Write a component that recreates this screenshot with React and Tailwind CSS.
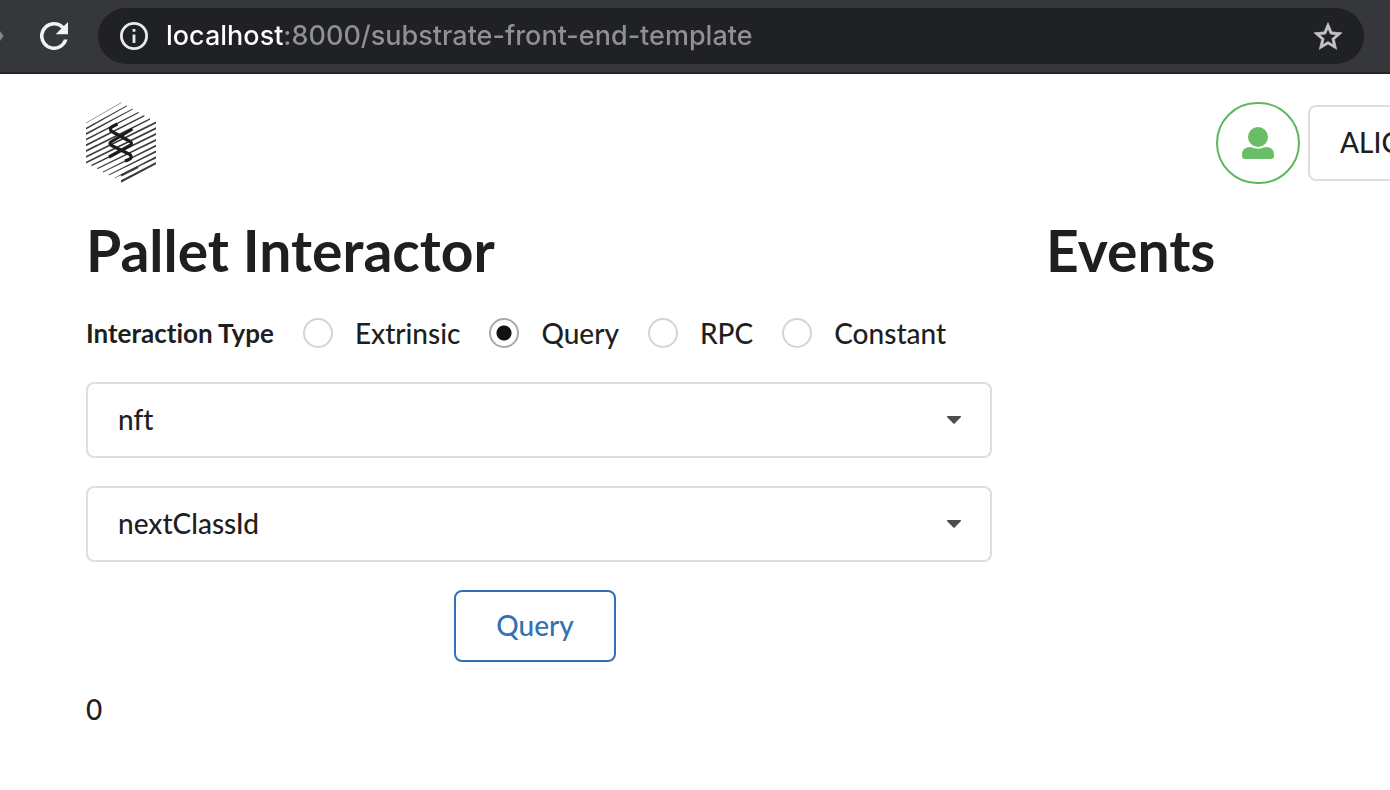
import { useState } from "react";

/* Each stripe: left x, left y, right x, right y, thickness at the left, thickness at the right */
const stripes = [
  [0, 21, 35.5, 0.5, 0.4, 0.7],
  [0, 26.6, 41, 3.8, 1.8, 0.9],
  [0, 32, 46.7, 7, 1.9, 1.1],
  [0, 37.6, 52.7, 10.3, 1.9, 1.3],
  [0, 43.3, 58.3, 13.8, 1.9, 1.5],
  [0, 49, 64, 17, 1.9, 1.6],
  [0, 54.8, 70, 20.5, 1.8, 1.8],
  [0, 60.6, 70, 26.3, 1.7, 1.9],
  [5.5, 63.4, 70, 32.1, 1.5, 2],
  [11.3, 66.7, 70, 37.9, 1.3, 2],
  [17, 70, 70, 43.7, 1.1, 2.1],
  [22.8, 73, 70, 49.5, 0.9, 2.2],
  [28.6, 76, 70, 55.3, 0.6, 2.3],
  [35, 79.5, 70, 61.1, 2.3, 2.3],
];

function SubstrateLogo() {
  return (
    <svg viewBox="0 0 70 82" className="h-[82px] w-[70px]" role="img" aria-label="Substrate">
      {stripes.map(([x1, y1, x2, y2, a, b]) => (
        <polygon
          key={y1}
          fill="#3a3a3a"
          points={`${x1},${y1 - a / 2} ${x2},${y2 - b / 2} ${x2},${y2 + b / 2} ${x1},${y1 + a / 2}`}
        />
      ))}
      <path d="M35 73.500L52 65" stroke="#3a3a3a" strokeWidth="2.2" />
      <g fill="none" stroke="#1c1c1c" strokeWidth="3.2" strokeLinejoin="round">
        <path d="M31.500 22l-5.500 2.800q-2.500 1.700-1 4.200L44 39.500q3 2 0 4L23 55" />
        <path d="M46.500 27L25.500 39.500q-3 2 0 4L44 52.500q2 2.500.5 4-1.500 1.300-5.500 2.500" />
      </g>
    </svg>
  );
}

function Dropdown({ label, options }) {
  return (
    <div className="relative">
      <select
        aria-label={label}
        className="block h-[76px] w-full appearance-none rounded-lg border-2 border-[#dededf] bg-white px-[30px] pb-0.5 text-[28px] font-medium text-[#1f1f1f]"
      >
        {options.map((option) => (
          <option key={option}>{option}</option>
        ))}
      </select>
      <svg viewBox="0 0 14 8" className="pointer-events-none absolute top-[34px] right-[31px] h-2 w-3.5">
        <path d="M.5 0h13q1 .5 0 1.500L7.700 7.500q-.7.600-1.400 0L.5 1.500Q-.5.500.5 0z" fill="#4c4c4c" />
      </svg>
    </div>
  );
}

function BrowserBar() {
  return (
    <header className="flex h-[74px] items-center border-b-2 border-[#242529] bg-[#36373b] pr-[26px]">
      <svg viewBox="0 0 4 10" className="h-2.5 w-1">
        <path d="M0 0l3.500 5L0 10z" fill="#85868a" />
      </svg>
      <button type="button" aria-label="Reload" className="ml-9">
        <svg viewBox="4 4 16 16" className="h-7 w-7" fill="#f1f3f4">
          <path d="M17.65 6.350A7.960 7.960 0 0 0 12 4a8 8 0 1 0 7.730 10h-2.080A6 6 0 1 1 12 6c1.660 0 3.140.690 4.220 1.780L13 11h7V4z" />
        </svg>
      </button>
      <div className="ml-[30px] flex h-14 flex-1 items-center rounded-full bg-[#202124] px-[22px]">
        <svg viewBox="2 2 20 20" className="h-7 w-7" fill="#e8eaed">
          <path d="M11 7h2v2h-2zm0 4h2v6h-2zm1-9a10 10 0 1 0 0 20 10 10 0 0 0 0-20zm0 18a8 8 0 1 1 0-16 8 8 0 0 1 0 16z" />
        </svg>
        <input
          type="text"
          aria-label="Address"
          defaultValue="localhost:8000/substrate-front-end-template"
          className="ml-[18px] h-10 min-w-0 flex-1 bg-[linear-gradient(to_right,#fff_118px,#909194_118px)] bg-clip-text font-['Inter',sans-serif] text-[27px] font-medium text-transparent outline-none"
        />
        <button type="button" aria-label="Bookmark this page">
          <svg viewBox="2 2 20 19" className="h-7 w-7" fill="#c4c5c8" stroke="#c4c5c8" strokeWidth=".5">
            <path d="M22 9.240l-7.190-.620L12 2 9.190 8.630 2 9.240l5.460 4.730L5.820 21 12 17.270 18.180 21l-1.630-7.030zM12 15.400l-3.760 2.270 1-4.280-3.320-2.880 4.380-.380L12 6.100l1.710 4.040 4.380.380-3.320 2.880 1 4.280z" />
          </svg>
        </button>
      </div>
    </header>
  );
}

const types = ["Extrinsic", "Query", "RPC", "Constant"];

export default function App() {
  const [type, setType] = useState("Query");
  return (
    <div className="min-h-screen overflow-x-hidden bg-white font-['Lato',sans-serif] text-[28px] leading-10 font-medium text-[#1f1f1f] [font-variant-ligatures:none]">
      <BrowserBar />
      <nav className="-mr-[218px] flex items-center justify-between pt-7 pl-[86px]">
        <a href="#home">
          <SubstrateLogo />
        </a>
        <div className="flex items-center gap-2">
          <button
            type="button"
            aria-label="Account"
            className="flex h-[82px] w-[84px] items-center justify-center rounded-[42px] border-2 border-[#5cb85c]"
          >
            <svg viewBox="0 0 32 32" className="h-8 w-8" fill="#69bd67">
              <circle cx="16" cy="10" r="10" />
              <path d="M8.500 20q3.500 1.800 7.500 1.800t7.500-1.800Q32 20 32 28v1q0 3-3 3H3q-3 0-3-3v-1q0-8 8.500-8z" />
            </svg>
          </button>
          <div className="w-[300px]">
            <Dropdown label="Account" options={["ALICE"]} />
          </div>
        </div>
      </nav>
      <main className="flex gap-[54px] pt-[30px] pl-[86px]">
        <section className="flex min-w-0 flex-1 flex-col">
          <h1 className="text-[57px] leading-[72px] font-bold">Pallet Interactor</h1>
          <fieldset className="mt-[27px] flex items-center gap-[29px]">
            <legend className="float-left text-[26px] font-bold">Interaction Type</legend>
            {types.map((name) => (
              <label key={name} className="flex items-center gap-[22px]">
                <input
                  type="radio"
                  name="interaction"
                  value={name}
                  checked={type === name}
                  onChange={() => setType(name)}
                  className="h-[30px] w-[30px] appearance-none rounded-full border-2 border-[#d4d4d5] bg-white checked:border-[#a9a9aa] checked:bg-[radial-gradient(circle,#111_7px,transparent_8px)]"
                />
                {name}
              </label>
            ))}
          </fieldset>
          <div className="mt-[29px] flex flex-col gap-7">
            <Dropdown label="Pallet" options={["nft"]} />
            <Dropdown label="Storage item" options={["nextClassId"]} />
          </div>
          <div className="mt-7 flex justify-center pr-2">
            <button
              type="button"
              className="h-[72px] w-[162px] rounded-lg border-2 border-[#3271b3] pb-0.5 text-[#3271b3]"
            >
              Query
            </button>
          </div>
          <output className="mt-[27px]">0</output>
        </section>
        <section className="w-[344px]">
          <h1 className="text-[57px] leading-[72px] font-bold">Events</h1>
        </section>
      </main>
    </div>
  );
}
